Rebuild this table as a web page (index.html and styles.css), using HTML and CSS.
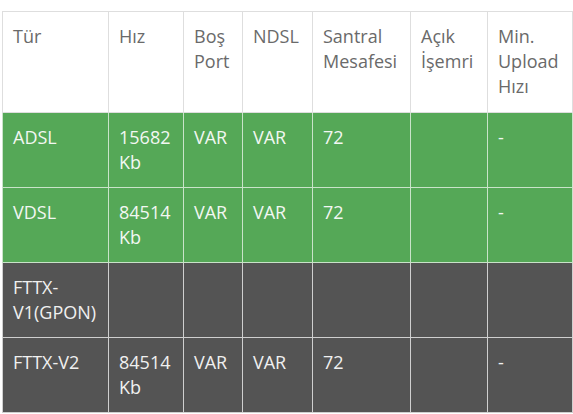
FILE: index.html
```html
<!DOCTYPE html>
<html lang="tr">
<head>
<meta charset="utf-8">
<link rel="stylesheet" href="styles.css">
</head>
<body>
<div class="wrap">
<table class="grid">
<colgroup>
<col class="c1"><col class="c2"><col class="c3"><col class="c4"><col class="c5"><col class="c6"><col class="c7">
</colgroup>
<thead>
<tr><th>Tür</th><th>Hız</th><th>Boş Port</th><th>NDSL</th><th>Santral Mesafesi</th><th>Açık İşemri</th><th>Min. Upload Hızı</th></tr>
</thead>
<tbody>
<tr class="ok"><td>ADSL</td><td>15682 Kb</td><td>VAR</td><td>VAR</td><td>72</td><td></td><td>-</td></tr>
<tr class="ok"><td>VDSL</td><td>84514 Kb</td><td>VAR</td><td>VAR</td><td>72</td><td></td><td>-</td></tr>
<tr class="na"><td>FTTX-V1(GPON)</td><td></td><td></td><td></td><td></td><td></td><td></td></tr>
<tr class="na"><td>FTTX-V2</td><td>84514 Kb</td><td>VAR</td><td>VAR</td><td>72</td><td></td><td>-</td></tr>
</tbody>
</table>
</div>
</body>
</html>
```

FILE: styles.css
```css
html, body {
  margin: 0;
  padding: 0;
  background: #ffffff;
}
.wrap {
  padding: 11px 1px 0 2px;
}
.grid {
  width: 570px;
  table-layout: fixed;
  border-collapse: collapse;
  font-family: "Open Sans", "DejaVu Sans", sans-serif;
  font-size: 18px;
  line-height: 25px;
}
.c1 { width: 106px; }
.c2 { width: 75px; }
.c3 { width: 59px; }
.c4 { width: 70px; }
.c5 { width: 98px; }
.c6 { width: 77px; }
.c7 { width: 85px; }
.grid th, .grid td {
  border: 1px solid #dedede;
  padding: 12px 5px 12px 10px;
  text-align: left;
  vertical-align: top;
  font-weight: normal;
}
.grid th {
  color: #6a6a6a;
  padding-bottom: 13px;
}
.grid tr.ok td {
  background: #55a857;
  color: #f2f7f2;
  border-color: #c9e3c9;
}
.grid tr.na td {
  background: #545454;
  color: #f0f0f0;
  border-color: #cfcfcf;
}
```
